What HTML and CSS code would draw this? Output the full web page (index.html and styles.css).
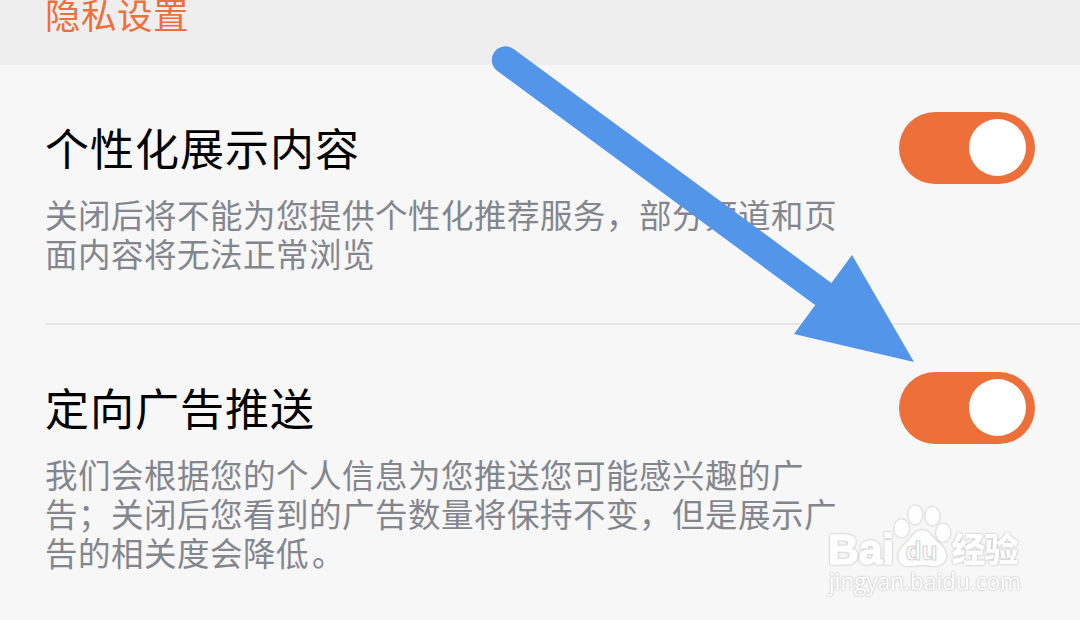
FILE: index.html
```html
<!DOCTYPE html>
<html lang="zh-CN">
<head>
<meta charset="utf-8">
<title>隐私设置</title>
<link rel="stylesheet" href="styles.css">
</head>
<body>
<main class="screen">
  <header class="section-head"><h1 class="section-title">隐私设置</h1></header>
  <section class="row">
    <div class="row-text">
      <h2 class="row-title">个性化展示内容</h2>
      <p class="row-desc">关闭后将不能为您提供个性化推荐服务，部分频道和页<br>面内容将无法正常浏览</p>
    </div>
    <div class="switch" role="switch" aria-checked="true"><span class="knob"></span></div>
  </section>
  <div class="divider"></div>
  <section class="row">
    <div class="row-text">
      <h2 class="row-title">定向广告推送</h2>
      <p class="row-desc">我们会根据您的个人信息为您推送您可能感兴趣的广<br>告；关闭后您看到的广告数量将保持不变，但是展示广<br>告的相关度会降低<span class="stop">。</span></p>
    </div>
    <div class="switch" role="switch" aria-checked="true"><span class="knob"></span></div>
  </section>
  <svg class="overlay" width="1080" height="620" viewBox="0 0 1080 620">
    <g class="arrow">
      <path class="arrow-shaft" d="M505.5 60 L826 296"/>
      <path class="arrow-head" d="M852 255 L914 362 L794 334 Z"/>
    </g>
    <g class="mark">
      <text class="mark-latin" x="828" y="563.5" textLength="66" lengthAdjust="spacingAndGlyphs">Bai</text>
      <ellipse cx="901.7" cy="528.5" rx="7.3" ry="9.2"/>
      <ellipse cx="915.3" cy="514.7" rx="7" ry="9.5"/>
      <ellipse cx="932.5" cy="516" rx="7.2" ry="9.2"/>
      <ellipse cx="943.2" cy="532.7" rx="7.2" ry="9.2"/>
      <path d="M922 530 C914 530 911 539 905 544 C897 550 896 561 903 565 C909 568 915 565 922 565 C929 565 936 568 942 564 C949 559 947 550 940 544 C933 539 930 530 922 530 Z"/>
      <text class="mark-cjk" x="951.5" y="562" textLength="67">经验</text>
      <text class="mark-url" x="829" y="590" textLength="192" lengthAdjust="spacingAndGlyphs">jingyan.baidu.com</text>
    </g>
    <text class="mark-du" x="905.5" y="560" textLength="32" lengthAdjust="spacingAndGlyphs">du</text>
  </svg>
</main>
</body>
</html>
```
FILE: styles.css
```css
body {
  margin: 0;
  background: #f7f7f7;
  font-family: "Noto Sans CJK SC", sans-serif;
}

.screen {
  position: relative;
  width: 1080px;
  height: 620px;
  overflow: hidden;
}

.section-head {
  display: flex;
  align-items: flex-end;
  box-sizing: border-box;
  height: 65px;
  padding: 0 45px 33px;
  background: #eeeeee;
}

.section-title {
  margin: 0;
  color: #ee7038;
  font-size: 35.5px;
  font-weight: 400;
  line-height: 36px;
  letter-spacing: 0.5px;
}

.row {
  display: flex;
  justify-content: space-between;
  align-items: flex-start;
  box-sizing: border-box;
  height: 258px;
  padding: 47px 45px 0;
}

.row-text {
  padding-top: 9px;
  white-space: nowrap;
}

.row-title {
  margin: 0 0 20px;
  color: #000;
  font-size: 44px;
  font-weight: 400;
  line-height: 53px;
  letter-spacing: 1px;
}

.row-desc {
  margin: 0;
  color: #84868e;
  font-size: 32.5px;
  line-height: 39px;
  letter-spacing: 0.5px;
}

.stop {
  margin-left: 3px;
}

.switch {
  display: flex;
  justify-content: flex-end;
  box-sizing: border-box;
  width: 136px;
  height: 72px;
  padding: 7px 9px;
  border-radius: 36px;
  background: #ed6f39;
}

.knob {
  width: 57px;
  height: 57px;
  border-radius: 50%;
  background: #fff;
}

.divider {
  height: 2px;
  margin-left: 45px;
  background: #e6e6e6;
}

.overlay {
  position: absolute;
  top: 0;
  left: 0;
}

.arrow-shaft {
  fill: none;
  stroke: #5295e9;
  stroke-width: 27.4px;
  stroke-linecap: round;
}

.arrow-head {
  fill: #5295e9;
}

.mark {
  fill: #fefefe;
  filter: drop-shadow(0 0 1px #b0b0b0);
}

.mark-latin {
  font: 700 43px "Liberation Sans", sans-serif;
  stroke: #fefefe;
  stroke-width: 1.6px;
}

.mark-du {
  font: 700 26px "Liberation Sans", sans-serif;
  fill: #fefefe;
  stroke: #d6d6d6;
  stroke-width: 1.2px;
}

.mark-cjk {
  font: 900 34px "Noto Sans CJK SC", sans-serif;
}

.mark-url {
  font: 400 24px "Open Sans", sans-serif;
}
```
